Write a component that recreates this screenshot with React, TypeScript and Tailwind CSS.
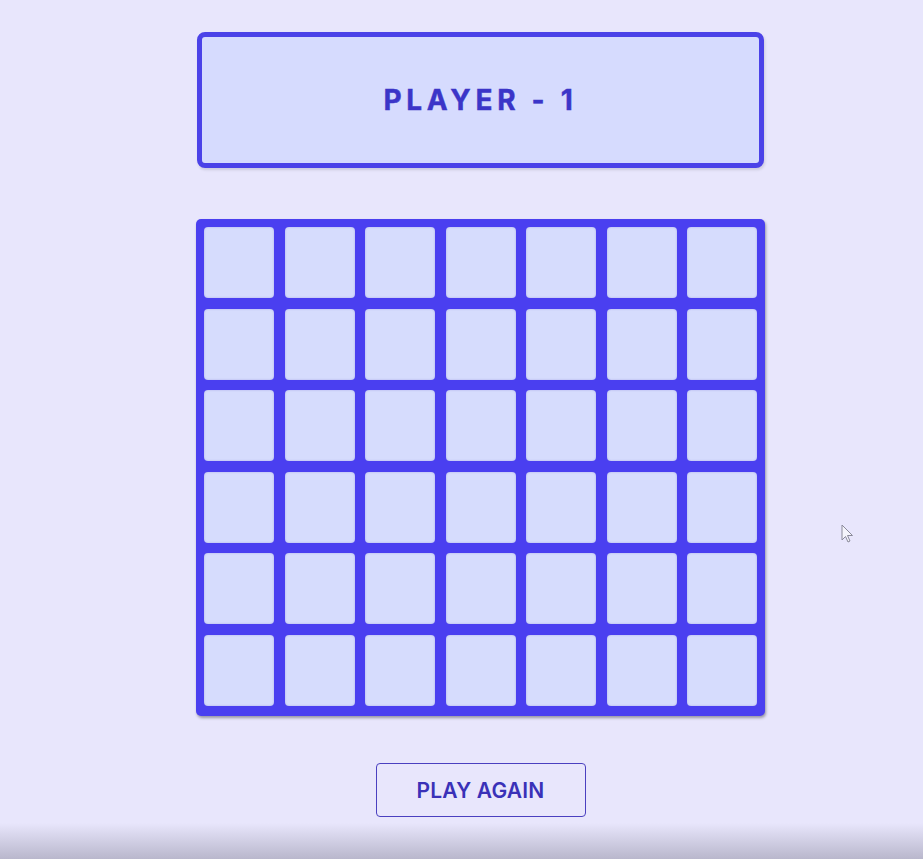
import React from "react";

export default function App() {
  const cells = Array.from({ length: 42 }, (_, i) => i);
  return (
    <div
      className="relative min-h-[859px] w-full bg-[#e8e6fc] overflow-hidden"
      style={{ fontFamily: "Inter, 'Noto Sans', sans-serif" }}
    >
      <div className="flex flex-col items-center pl-[38px] pt-[32px]">
        <div className="flex h-[136px] w-[567px] items-center justify-center rounded-[8px] border-[5px] border-[#4b42e8] bg-[#d6dbfe] shadow-[1px_2px_3px_rgba(0,0,0,0.12)]">
          <span className="text-[28px] font-bold tracking-[4.7px] text-[#3b35c8] [-webkit-text-stroke:0.4px_#3b35c8]">
            PLAYER - 1
          </span>
        </div>
        <div className="mt-[51px] grid w-[569px] grid-cols-7 gap-x-[10.5px] gap-y-[10.5px] rounded-[5px] bg-[#4a3ff0] p-[8px] pb-[10px] shadow-[1px_2px_3px_rgba(0,0,0,0.35)]">
          {cells.map((i) => (
            <div
              key={i}
              className="h-[71px] rounded-[4px] bg-[#d6dcfd] shadow-[inset_0_0_2px_rgba(60,50,180,0.3)]"
            />
          ))}
        </div>
        <button className="mt-[47px] flex h-[54px] w-[210px] items-center justify-center rounded-[4px] border border-[#4a40c0] bg-[#e8e6fc] pt-[2px] text-[21px] font-semibold tracking-[0.2px] text-[#3a31b8]">
          PLAY AGAIN
        </button>
      </div>
      <svg
        className="absolute left-[841px] top-[524px]"
        width="14"
        height="20"
        viewBox="0 0 14 20"
      >
        <path
          d="M1 1 L1 16 L4.5 12.5 L7 18 L9 17 L6.5 11.5 L11.5 11.5 Z"
          fill="#f4f4fb"
          stroke="#8a8a9a"
          strokeWidth="1"
        />
      </svg>
      <div className="pointer-events-none absolute bottom-0 left-0 h-[36px] w-full bg-gradient-to-b from-[rgba(232,230,252,0)] to-[#b9b7cc]" />
    </div>
  );
}
